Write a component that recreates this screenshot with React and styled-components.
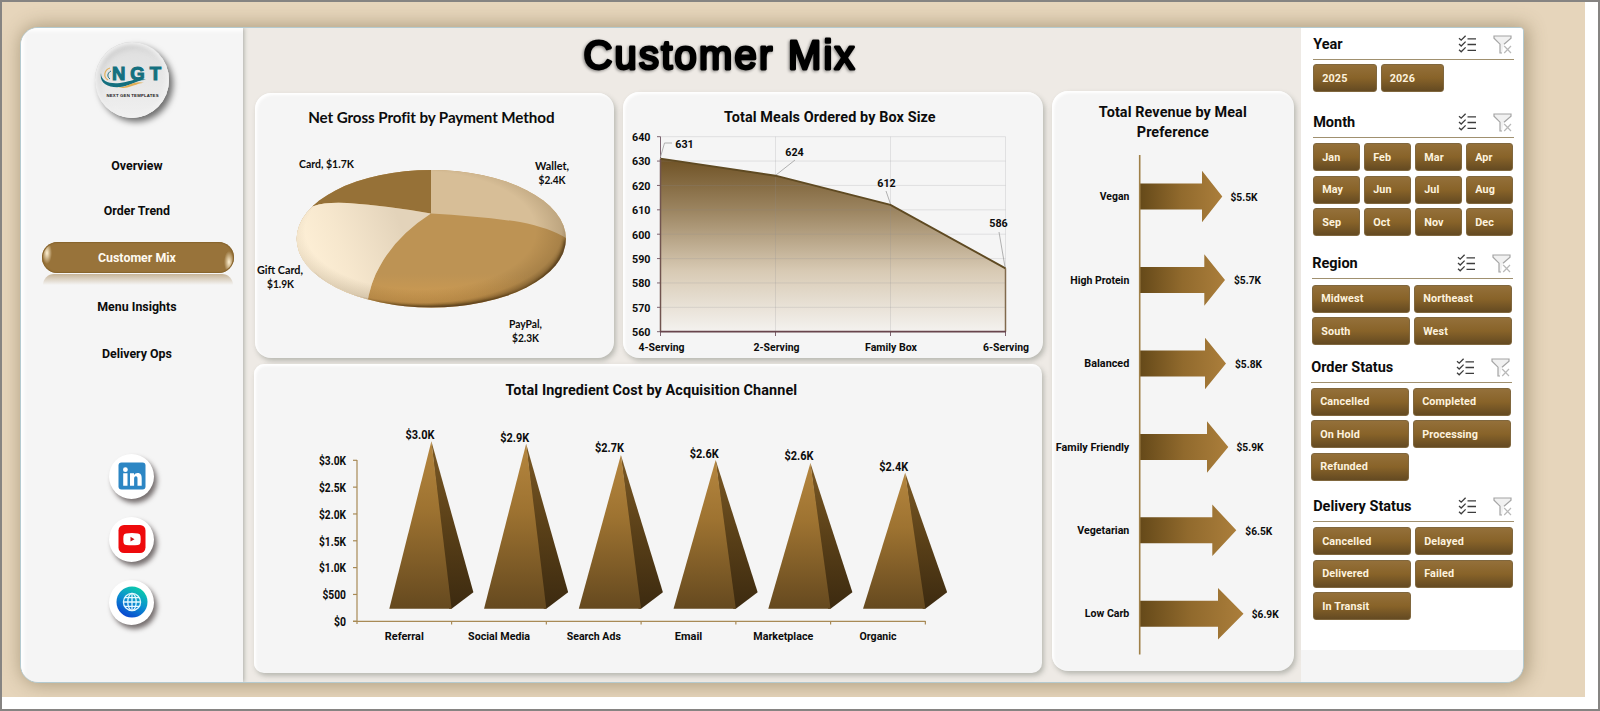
import React from 'react';
import styled, { createGlobalStyle } from 'styled-components';

const navItems = ['Overview', 'Order Trend', 'Customer Mix', 'Menu Insights', 'Delivery Ops'];

const slicers = [
  { title: 'Year', cols: '63.5px 63.5px', before: 1, gap: 4, items: ['2025', '2026'] },
  {
    title: 'Month', cols: 'repeat(4, 47px)', before: 15, gap: 5,
    items: ['Jan', 'Feb', 'Mar', 'Apr', 'May', 'Jun', 'Jul', 'Aug', 'Sep', 'Oct', 'Nov', 'Dec']
  },
  { title: 'Region', cols: '98px 98px', before: 12, gap: 5.5, shift: -1, items: ['Midwest', 'Northeast', 'South', 'West'] },
  {
    title: 'Order Status', cols: '98px 98px', before: 7, gap: 4.5, shift: -2,
    items: ['Cancelled', 'Completed', 'On Hold', 'Processing', 'Refunded']
  },
  {
    title: 'Delivery Status', cols: '98px 98px', before: 10.5, gap: 5,
    items: ['Cancelled', 'Delayed', 'Delivered', 'Failed', 'In Transit']
  },
];

const meals = [
  { label: '4-Serving', value: 631, x: 660.5, w: 46, lx: 661.5, tx: 684.5, ty: 143.5, line: '660.5,157 664.5,143 672,143' },
  { label: '2-Serving', value: 624, x: 775.5, w: 46, lx: 776.5, tx: 794.5, ty: 151.5, line: '776,175 795,160' },
  { label: 'Family Box', value: 612, x: 890.5, w: 52, lx: 891, tx: 886.5, ty: 183, line: '890.5,204 886,191' },
  { label: '6-Serving', value: 586, x: 1005.5, w: 46, lx: 1006, tx: 998.5, ty: 222.5, line: '1005,267 999,232' },
];

const channels = [
  { label: 'Referral', value: '$3.0K', w: 39, top: 441.3, ty: 435 },
  { label: 'Social Media', value: '$2.9K', w: 62, top: 443.8, ty: 437.5 },
  { label: 'Search Ads', value: '$2.7K', w: 54, top: 455, ty: 448 },
  { label: 'Email', value: '$2.6K', w: 27.5, top: 460, ty: 453.5 },
  { label: 'Marketplace', value: '$2.6K', w: 60, top: 463, ty: 456 },
  { label: 'Organic', value: '$2.4K', w: 37, top: 472.7, ty: 466.5 },
];

const revenue = [
  { label: 'Vegan', value: '$5.5K', w: 29.5, y: 196.5, head: 1202, tip: 1222.3, vx: 1230.5 },
  { label: 'High Protein', value: '$5.7K', w: 59, y: 280, head: 1204.3, tip: 1225, vx: 1234 },
  { label: 'Balanced', value: '$5.8K', w: 45, y: 363.5, head: 1205, tip: 1226, vx: 1235 },
  { label: 'Family Friendly', value: '$5.9K', w: 73.5, y: 447, head: 1207, tip: 1228.3, vx: 1236.5 },
  { label: 'Vegetarian', value: '$6.5K', w: 52, y: 530.3, head: 1212.3, tip: 1236.3, vx: 1245.3 },
  { label: 'Low Carb', value: '$6.9K', w: 44.5, y: 613.7, head: 1218, tip: 1243.5, vx: 1251.7 },
];

const mealY = (v) => 331.7 - (v - 560) * 2.4375;

// SVG label centred vertically on y and fitted to width w
function Label({ x, y, w, anchor = 'middle', size = 11, children }) {
  return (
    <text
      x={x}
      y={y + size * 0.345}
      fontSize={size}
      textAnchor={anchor}
      textLength={w}
      lengthAdjust="spacingAndGlyphs"
    >
      {children}
    </text>
  );
}

function Logo() {
  return (
    <svg width="64" height="42" viewBox="0 -6 64 42">
      <path d="M10 3C4 5 3 12 8 15" fill="none" stroke="#e0b05c" strokeWidth="1.2" />
      <path d="M11 6C7 8 7 12 10 14" fill="none" stroke="#1f7482" strokeWidth="1" />
      <path d="M1 8C1 17 10 19 20 18C30 17 38 12 46 15C38 14 31 21 20 22C8 23-1 18 1 8Z" fill="#14707f" />
      <path d="M17 23C29 22 34 15 44 18C38 17 31 24 17 23Z" fill="#e2ae55" />
      <LogoName x="12" y="15" textLength="49">NGT</LogoName>
      <LogoTag x="6.5" y="31.5" textLength="52">NEXT GEN TEMPLATES</LogoTag>
    </svg>
  );
}

function LinkedIn() {
  return (
    <svg width="28" height="28" viewBox="0 0 28 28">
      <rect x="0.5" y="0.5" width="27" height="27" rx="3" fill="#2c86c4" />
      <circle cx="7.4" cy="7.7" r="2.4" fill="#fff" />
      <path d="M5.2 11.3h4.3v12.4H5.2zM12 11.3h4v1.8c.8-1.3 2-2.1 3.6-2.1 3.2 0 4.1 2.1 4.1 5.2v7.5h-4.2v-6.8c0-1.6-.3-2.6-1.6-2.6s-1.8 1-1.8 2.6v6.8H12z" fill="#fff" />
    </svg>
  );
}

function YouTube() {
  return (
    <svg width="28" height="28" viewBox="0 0 28 28">
      <rect x="0.5" y="0" width="27" height="28" rx="5.5" fill="#ee0a0c" />
      <path d="M8 8.5Q14 7.7 20 8.5Q22.3 8.7 22.5 11Q22.9 14 22.5 17.5Q22.3 19.8 20 20Q14 20.6 8 20Q5.7 19.8 5.5 17.5Q5.1 14 5.5 11Q5.7 8.7 8 8.5Z" fill="#fff" />
      <path d="M12.5 11.8L16.5 14.2L12.5 16.6Z" fill="#c8141a" />
    </svg>
  );
}

function Globe() {
  return (
    <svg width="32" height="32" viewBox="0 0 32 32">
      <defs>
        <linearGradient id="globe" x1="0.75" y1="0" x2="0.25" y2="1">
          <stop offset="0" stopColor="#0bd0a8" />
          <stop offset="0.5" stopColor="#0b8fd0" />
          <stop offset="1" stopColor="#0a3fd0" />
        </linearGradient>
      </defs>
      <circle cx="16" cy="16" r="15.5" fill="url(#globe)" />
      <g fill="none" stroke="#e4f8ff" strokeWidth="1.3">
        <circle cx="16" cy="16" r="8.6" />
        <ellipse cx="16" cy="16" rx="4.2" ry="8.6" />
        <path d="M16 7.4V24.6M7.4 16H24.6M8.8 11.6H23.2M8.8 20.4H23.2" />
      </g>
    </svg>
  );
}

function MultiSelectIcon() {
  return (
    <svg width="19" height="18" viewBox="0 0 19 18" fill="none" stroke="#3d3d3d" strokeWidth="1.3">
      <path d="M1 3.2L3.2 5.2L7.6 0.8M1 9L3.2 11L7.6 6.6M1 14.8L3.2 16.8L7.6 12.4" />
      <path d="M9.5 3.8H18M9.5 9.5H18M9.5 15.3H18" />
    </svg>
  );
}

function ClearFilterIcon() {
  return (
    <svg width="19" height="19" viewBox="0 0 19 19" fill="none" stroke="#a4a4a4" strokeWidth="1.2">
      <path d="M9 18H7V9.2L1 3.2V1H18V3.2L11 9.3" fill="#f1f1f1" />
      <path d="M11.2 11L18 18M18 11L11.2 18" stroke="#b9b9b9" />
    </svg>
  );
}

function PieChart() {
  return (
    <Chart viewBox="255 130 359 227" width="359" height="227">
      <defs>
        <clipPath id="pieClip">
          <ellipse cx="431.3" cy="238.8" rx="134.7" ry="68.8" />
        </clipPath>
        <linearGradient id="pieSide" x1="0" y1="0.3" x2="1" y2="0">
          <stop offset="0" stopColor="#fff1d8" />
          <stop offset="0.3" stopColor="#fdeed4" stopOpacity="0.75" />
          <stop offset="0.75" stopColor="#fff1d8" stopOpacity="0" />
        </linearGradient>
        <linearGradient id="pieLow" x1="0" y1="0" x2="0" y2="1">
          <stop offset="0.75" stopColor="#d9a050" stopOpacity="0" />
          <stop offset="0.94" stopColor="#d9a050" stopOpacity="0.6" />
        </linearGradient>
        <radialGradient id="pieRim" cx="0.46" cy="0.44" r="0.57">
          <stop offset="0.75" stopColor="#3c2708" stopOpacity="0" />
          <stop offset="0.92" stopColor="#3c2708" stopOpacity="0.16" />
          <stop offset="1" stopColor="#2a1a04" stopOpacity="0.5" />
        </radialGradient>
        <filter id="rimBlur"><feGaussianBlur stdDeviation="1.8" /></filter>
      </defs>
      <g clipPath="url(#pieClip)">
        <rect x="296" y="169" width="271" height="140" fill="#bd9354" />
        <rect x="296" y="169" width="271" height="140" fill="url(#pieLow)" />
        <path d="M431 213.5V165H570V241Q555 229 520 222Q478 216 431 213.5Z" fill="#d7be97" />
        <path d="M431 213.5V165H290V212L314 206Q325 202 347 203Q390 206 431 213.5Z" fill="#967137" />
        <path d="M431 213.5Q396 236 380 266Q370 282 366 310H290V212L314 206Q325 202 347 203Q390 206 431 213.5Z" fill="#e3d3ba" />
        <path d="M431 213.5Q396 236 380 266Q370 282 366 310H290V212L314 206Q325 202 347 203Q390 206 431 213.5Z" fill="url(#pieSide)" />
        <ellipse cx="431.3" cy="238.8" rx="134.7" ry="68.8" fill="url(#pieRim)" />
        <path d="M312 275Q335 297 368 302.5Q450 316 520 293Q562 271 566 240" fill="none" stroke="#3b270b" strokeWidth="3" opacity="0.75" filter="url(#rimBlur)" />
      </g>
      <g fontFamily="Lato, sans-serif">
        <Label x={326.5} y={164} w={55} size={11.5}>Card, $1.7K</Label>
        <Label x={552} y={166} w={34} size={11.5}>Wallet,</Label>
        <Label x={552} y={180} w={27} size={11.5}>$2.4K</Label>
        <Label x={280} y={270} w={46} size={11.5}>Gift Card,</Label>
        <Label x={280.5} y={284} w={27} size={11.5}>$1.9K</Label>
        <Label x={525.5} y={324} w={33} size={11.5}>PayPal,</Label>
        <Label x={525.5} y={338} w={27} size={11.5}>$2.3K</Label>
      </g>
    </Chart>
  );
}

function MealsChart() {
  const line = meals.map((m) => `${m.x},${mealY(m.value)}`).join(' ');
  const ticks = [640, 630, 620, 610, 600, 590, 580, 570, 560];
  return (
    <Chart viewBox="623 130 420 227" width="420" height="227">
      <defs>
        <linearGradient id="area" x1="0" y1="0" x2="0" y2="1">
          <stop offset="0" stopColor="#6f5225" />
          <stop offset="0.3" stopColor="#9c8561" />
          <stop offset="0.65" stopColor="#d8cab4" />
          <stop offset="1" stopColor="#f4f2ef" />
        </linearGradient>
      </defs>
      <polygon points={`660.5,331.7 ${line} 1005.5,331.7`} fill="url(#area)" />
      <g stroke="#8a8a90" strokeOpacity="0.2">
        {ticks.map((t) => <path key={t} d={`M660.5 ${mealY(t)}H1005.5`} />)}
        {meals.map((m) => <path key={m.label} d={`M${m.x} 136.7V331.7`} />)}
      </g>
      <g stroke="#7d6470">
        {ticks.map((t) => <path key={t} d={`M657 ${mealY(t)}H660.5`} />)}
        {meals.map((m) => <path key={m.label} d={`M${m.x} 331.7V336`} />)}
        <path d="M660.5 136.7V158" />
      </g>
      <path d={`M660.5 331.7V${mealY(631)}`} stroke="#71544f" strokeWidth="1.5" />
      <path d={`M1005.5 ${mealY(586)}V331.7`} stroke="#816a4d" strokeWidth="1.5" />
      <path d="M660 331.7H1006" stroke="#68454c" strokeWidth="1.7" />
      <polyline points={line} fill="none" stroke="#5f4a22" strokeWidth="1.9" />
      {ticks.map((t) => (
        <Label key={t} x={650.5} y={mealY(t) + 0.3} w={18.5} size={11.7} anchor="end">{t}</Label>
      ))}
      {meals.map((m) => (
        <g key={m.label}>
          <polyline points={m.line} fill="none" stroke="#a8a8a8" strokeWidth="0.9" />
          <Label x={m.tx} y={m.ty} w={18.5} size={11.7}>{m.value}</Label>
          <Label x={m.lx} y={347.5} w={m.w}>{m.label}</Label>
        </g>
      ))}
    </Chart>
  );
}

function CostChart() {
  const axis = ['$3.0K', '$2.5K', '$2.0K', '$1.5K', '$1.0K', '$500', '$0'];
  const widths = [27, 27, 27, 27, 27, 23.5, 12];
  return (
    <Chart viewBox="254 402 788 270" width="788" height="270">
      <defs>
        <linearGradient id="front" x1="0" y1="0" x2="0" y2="1">
          <stop offset="0" stopColor="#b5863f" />
          <stop offset="0.4" stopColor="#9e7331" />
          <stop offset="1" stopColor="#65491f" />
        </linearGradient>
        <linearGradient id="side" x1="0" y1="0" x2="0" y2="1">
          <stop offset="0" stopColor="#7b5925" />
          <stop offset="0.5" stopColor="#5a4018" />
          <stop offset="1" stopColor="#3c2a10" />
        </linearGradient>
      </defs>
      <g stroke="#a88a56" strokeWidth="1.2">
        <path d="M357 460V624M353 621.3H925.5" />
        {axis.map((a, i) => <path key={a} d={`M353 ${460.3 + i * 26.83}H357`} />)}
        {channels.map((c, i) => <path key={c.label} d={`M${451.6 + i * 94.75} 621V624.5`} />)}
      </g>
      {axis.map((a, i) => (
        <Label key={a} x={346} y={461.2 + i * 26.75} w={widths[i]} size={12} anchor="end">{a}</Label>
      ))}
      {channels.map((c, i) => {
        const dx = i * 94.75;
        return (
          <g key={c.label}>
            {/* the side face runs under the front one so no seam shows */}
            <path d={`M${431.4 + dx} ${c.top}L${473.4 + dx} 592.3L${451.6 + dx} 608.8L${449 + dx} 608.8Z`} fill="url(#side)" />
            <path d={`M${431.4 + dx} ${c.top}L${451.6 + dx} 608.8H${389.3 + dx}Z`} fill="url(#front)" />
            <Label x={420 + dx} y={c.ty} w={29} size={12.5}>{c.value}</Label>
            <Label x={404.3 + dx} y={636.5} w={c.w}>{c.label}</Label>
          </g>
        );
      })}
    </Chart>
  );
}

function RevenueChart() {
  return (
    <Chart viewBox="1052 146 242 525" width="242" height="525">
      <defs>
        <linearGradient id="arrow" x1="0" y1="0" x2="1" y2="0">
          <stop offset="0" stopColor="#654919" />
          <stop offset="0.5" stopColor="#916a2d" />
          <stop offset="1" stopColor="#ab7e3b" />
        </linearGradient>
      </defs>
      {revenue.map((r) => (
        <g key={r.label}>
          <path
            d={`M1140 ${r.y - 13}H${r.head}V${r.y - 25.7}L${r.tip} ${r.y}L${r.head} ${r.y + 25.7}V${r.y + 13}H1140Z`}
            fill="url(#arrow)"
          />
          <Label x={1129.3} y={r.y} w={r.w} anchor="end">{r.label}</Label>
          <Label x={r.vx} y={r.y + 0.5} w={27} anchor="start" size={11.5}>{r.value}</Label>
        </g>
      ))}
      <path d="M1139.7 155V654.5" stroke="#9f8048" strokeWidth="1.6" />
    </Chart>
  );
}

function Slicer({ title, cols, before, gap, shift, items }) {
  return (
    <SlicerBox $before={before} $shift={shift || 0}>
      <SlicerHeader>
        <SlicerTitle>{title}</SlicerTitle>
        <MultiSelectIcon />
        <ClearFilterIcon />
      </SlicerHeader>
      <SlicerGrid $cols={cols} $gap={gap}>
        {items.map((item) => <SlicerButton key={item}>{item}</SlicerButton>)}
      </SlicerGrid>
    </SlicerBox>
  );
}

function App() {
  return (
    <Frame>
      <GlobalStyle />
      <Backdrop>
        <Panel>
          <Sidebar>
            <LogoBadge><Logo /></LogoBadge>
            <Nav>
              {navItems.map((item) => (
                <NavItem key={item} $active={item === 'Customer Mix'}>{item}</NavItem>
              ))}
            </Nav>
            <Socials>
              <SocialButton><LinkedIn /></SocialButton>
              <SocialButton><YouTube /></SocialButton>
              <SocialButton><Globe /></SocialButton>
            </Socials>
          </Sidebar>
          <Content>
            <PageTitle>
              <svg width="300" height="60" viewBox="569 28 300 60">
                <text x="583.5" y="69" textLength="271" lengthAdjust="spacing">Customer Mix</text>
              </svg>
            </PageTitle>
            <Board>
              <LeftBoard>
                <TopRow>
                  <Card $w={359} $h={265}>
                    <CardTitle $h={37} $top={14} $right={6} $font="Lato" $size={15.2} $spacing={-0.1}>Net Gross Profit by Payment Method</CardTitle>
                    <PieChart />
                  </Card>
                  <Card $w={420} $h={266}>
                    <CardTitle $h={38} $top={16} $right={6} $spacing={0.1}>Total Meals Ordered by Box Size</CardTitle>
                    <MealsChart />
                  </Card>
                </TopRow>
                <Card $w={788} $h={309} $radius={10}>
                  <CardTitle $h={38} $top={17} $left={7} $spacing={0.1}>Total Ingredient Cost by Acquisition Channel</CardTitle>
                  <CostChart />
                </Card>
              </LeftBoard>
              <Card $w={242} $h={580}>
                <CardTitle $h={55} $top={12} $spacing={0.1}>Total Revenue by Meal<br />Preference</CardTitle>
                <RevenueChart />
              </Card>
            </Board>
          </Content>
          <Filters>
            {slicers.map((s) => <Slicer key={s.title} {...s} />)}
          </Filters>
        </Panel>
      </Backdrop>
    </Frame>
  );
}

export default App;

const GlobalStyle = createGlobalStyle`
  * {
    box-sizing: border-box;
  }
  body {
    margin: 0;
    background: #fff;
    color: #0c0c0c;
    font-family: Roboto, 'Open Sans', sans-serif;
  }
`

const Frame = styled.div`
  width: 1600px;
  height: 711px;
  border: 2px solid #868482;
  background: #fff;
  overflow: hidden;
`

const Backdrop = styled.div`
  width: 1583px;
  height: 695px;
  padding: 25px 0 0 18px;
  background: #e6d5bb;
  overflow: hidden;
`

const Panel = styled.div`
  display: flex;
  width: 1504px;
  height: 656px;
  border: 1px solid #b4cad0;
  border-radius: 18px;
  border-top-right-radius: 4px;
  background: #eeeae5;
  box-shadow: 2px 0 18px 2px rgba(96, 80, 48, 0.42);
  overflow: hidden;
`

const Sidebar = styled.div`
  display: flex;
  flex-direction: column;
  align-items: center;
  width: 222px;
  height: 100%;
  padding-top: 14px;
  background: #f5f5f5;
  box-shadow: inset 3px 3px 4px #fff, 1px 0 4px rgba(90, 100, 90, 0.45);
`

const LogoBadge = styled.div`
  display: flex;
  align-items: center;
  justify-content: center;
  width: 74px;
  height: 76px;
  margin: 0 0 24.5px 0;
  border-radius: 50%;
  background: linear-gradient(#dedede, #f0f0f0);
  box-shadow: inset 0 0 4px 3px #f1f1f1, inset 3px 5px 6px #c6c6c6, 4px 4px 6px rgba(0, 0, 0, 0.55);
`

const LogoName = styled.text`
  font-family: 'Liberation Sans', Arial, sans-serif;
  font-size: 18.5px;
  font-weight: 700;
  fill: #14707f;
  stroke: #14707f;
  stroke-width: 1.1px;
`

const LogoTag = styled.text`
  font-family: 'Liberation Sans', Arial, sans-serif;
  font-size: 4.3px;
  font-weight: 700;
  fill: #222;
`

const Nav = styled.nav`
  display: grid;
  grid-template-rows: 45px 45px 50px 47px 47px;
  align-items: center;
  width: 192px;
  margin-left: 13px;
`

const NavItem = styled.a`
  position: relative;
  height: 31px;
  border-radius: 16px;
  line-height: 31px;
  text-align: center;
  padding-right: 3px;
  font-size: 12.4px;
  font-weight: 700;
  color: ${(p) => (p.$active ? '#fffaf0' : '#0c0c0c')};
  background: ${(p) => (p.$active ? '#98733a' : 'none')};
  ${(p) => p.$active && `
    box-shadow: inset 0 0 1px 1px #87642d;
    &:before {
      content: '';
      position: absolute;
      inset: 1px;
      border-radius: 16px;
      background:
        radial-gradient(ellipse 5px 11px at 4px 10px, #fff2d4, transparent),
        radial-gradient(ellipse 5px 11px at 186px 19px, #fff2d4, transparent);
    }
    &:after {
      content: '';
      position: absolute;
      left: 1px;
      right: 1px;
      top: 32px;
      height: 11px;
      border-radius: 14px 14px 0 0;
      background: linear-gradient(rgba(152, 115, 58, 0.5), rgba(152, 115, 58, 0));
    }
  `}
`

const Socials = styled.div`
  display: grid;
  gap: 18px;
  margin-top: 77px;
`

const SocialButton = styled.button`
  display: flex;
  align-items: center;
  justify-content: center;
  width: 45px;
  height: 45px;
  padding: 0;
  border: none;
  border-radius: 50%;
  background: #fff;
  box-shadow: 3px 4px 5px rgba(50, 40, 40, 0.65);
`

const Content = styled.div`
  width: 1059px;
  padding-left: 11px;
`

const PageTitle = styled.h1`
  height: 63px;
  margin: 0;
  padding-left: 315px;
  text {
    font-family: 'Liberation Sans', Arial, sans-serif;
    font-size: 40px;
    font-weight: 400;
    stroke: #000;
    stroke-width: 2.8px;
    stroke-linejoin: round;
    filter: drop-shadow(-1px 1px 1.5px rgba(0, 0, 0, 0.45));
  }
`

const Board = styled.div`
  display: flex;
  align-items: flex-start;
  gap: 10px;
`

const LeftBoard = styled.div`
  display: flex;
  flex-direction: column;
  gap: 6px;
  width: 788px;
  padding-top: 1px;
`

const TopRow = styled.div`
  display: flex;
  align-items: center;
  gap: 9px;
  padding-left: 1px;
`

const Card = styled.div`
  flex: none;
  width: ${(p) => p.$w}px;
  height: ${(p) => p.$h}px;
  border-radius: ${(p) => p.$radius || 16}px;
  background: #f5f5f5;
  box-shadow: inset 2px 2px 3px #fff, 2px 3px 5px rgba(120, 125, 115, 0.45);
`

const CardTitle = styled.h3`
  height: ${(p) => p.$h}px;
  margin: 0;
  padding: ${(p) => p.$top}px ${(p) => p.$right || 0}px 0 ${(p) => p.$left || 0}px;
  font-family: ${(p) => p.$font || 'Roboto'}, sans-serif;
  font-size: ${(p) => p.$size || 14.4}px;
  font-weight: 700;
  line-height: 20px;
  letter-spacing: ${(p) => p.$spacing || 0}px;
  text-align: center;
`

const Chart = styled.svg`
  display: block;
  font-weight: 700;
  fill: #0c0c0c;
`

const Filters = styled.div`
  width: 222px;
  height: 622px;
  padding-left: 12px;
  background: #fff;
  box-shadow: 0 34px 0 #f5f5f5;
`

const SlicerBox = styled.div`
  width: 201px;
  padding-top: ${(p) => p.$before}px;
  margin-left: ${(p) => p.$shift}px;
`

const SlicerHeader = styled.div`
  display: flex;
  align-items: center;
  gap: 16px;
  height: 31px;
  padding-right: 2px;
  border-bottom: 1px solid #a0906f;
`

const SlicerTitle = styled.h4`
  flex: 1;
  margin: 0;
  font-size: 14.5px;
  font-weight: 700;
`

const SlicerGrid = styled.div`
  display: grid;
  grid-template-columns: ${(p) => p.$cols};
  gap: 4.5px 4px;
  padding-top: ${(p) => p.$gap}px;
`

const SlicerButton = styled.button`
  height: 28px;
  padding: 0 0 0 8px;
  border: 1px solid #80673e;
  border-radius: 3px;
  background: linear-gradient(#94703a, #886329 50%, #644a22);
  color: #fdf2de;
  font-family: inherit;
  font-size: 10.8px;
  font-weight: 700;
  letter-spacing: 0.15px;
  text-align: left;
`
